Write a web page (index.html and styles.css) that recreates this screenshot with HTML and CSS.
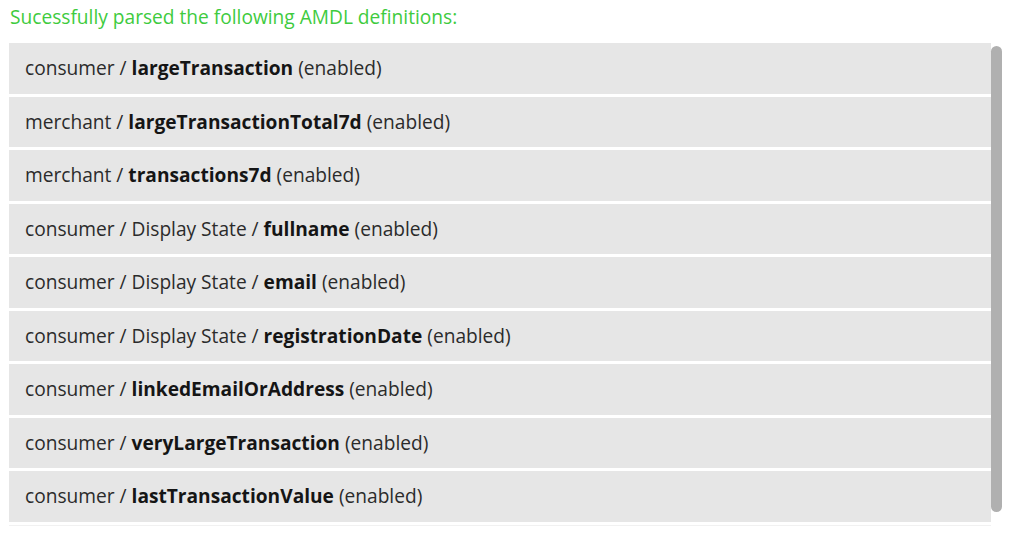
FILE: index.html
```html
<!DOCTYPE html>
<html>
<head>
<meta charset="utf-8">
<link rel="stylesheet" href="styles.css">
</head>
<body>
<p class="status">Sucessfully parsed the following AMDL definitions:</p>
<div class="panel">
  <div class="list">
    <div class="row">consumer / <b>largeTransaction</b> (enabled)</div>
    <div class="row">merchant / <b>largeTransactionTotal7d</b> (enabled)</div>
    <div class="row">merchant / <b>transactions7d</b> (enabled)</div>
    <div class="row">consumer / Display State / <b>fullname</b> (enabled)</div>
    <div class="row">consumer / Display State / <b>email</b> (enabled)</div>
    <div class="row">consumer / Display State / <b>registrationDate</b> (enabled)</div>
    <div class="row">consumer / <b>linkedEmailOrAddress</b> (enabled)</div>
    <div class="row">consumer / <b>veryLargeTransaction</b> (enabled)</div>
    <div class="row">consumer / <b>lastTransactionValue</b> (enabled)</div>
    <div class="list-end"></div>
  </div>
  <div class="scrollbar"><div class="thumb"></div></div>
</div>
</body>
</html>
```
FILE: styles.css
```css
html, body {
  margin: 0;
  padding: 0;
  background: #ffffff;
}
body {
  padding: 0 18px 0 9px;
  font-family: "Open Sans", "Liberation Sans", sans-serif;
  color: #2b2b2b;
}
.status {
  margin: 0 0 13px 0;
  padding: 4px 0 0 1px;
  font-size: 19.15px;
  line-height: 26px;
  color: #3ecb3e;
}
.panel {
  display: grid;
  grid-template-columns: 1fr 11px;
  height: 483px;
}
.list {
  overflow: hidden;
  display: flex;
  flex-direction: column;
  gap: 3px;
}
.row {
  flex: none;
  box-sizing: border-box;
  height: 50.5px;
  padding: 12px 16px;
  line-height: 26px;
  background: #e6e6e6;
  font-size: 19.15px;
  white-space: nowrap;
}
.row b {
  font-weight: 700;
  color: #151515;
}
.list-end {
  flex: none;
  height: 15px;
  background: #f1f1f1;
}
.scrollbar {
  background: #ffffff;
  padding-top: 3px;
}
.thumb {
  height: 466px;
  background: #b0b0b0;
  border-radius: 6px;
}
```
